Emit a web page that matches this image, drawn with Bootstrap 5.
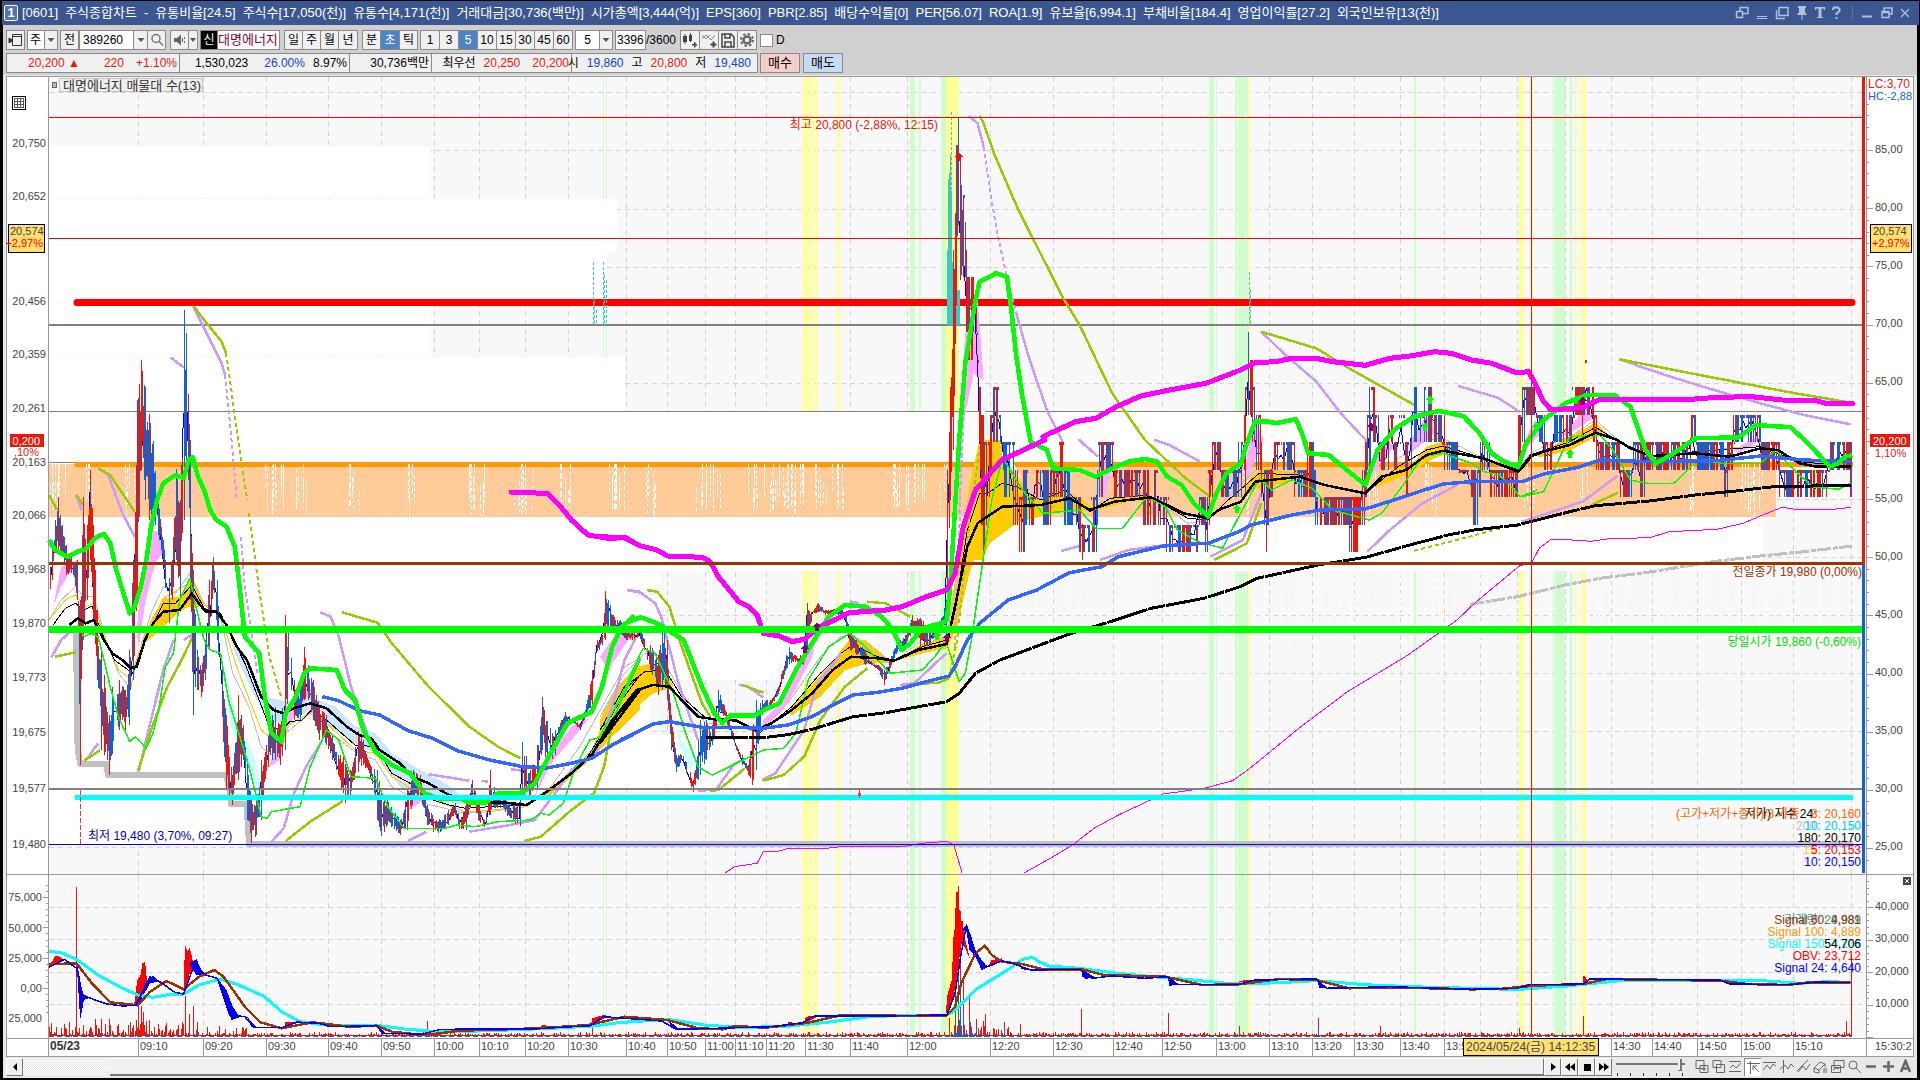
<!DOCTYPE html>
<html lang="ko">
<head>
<meta charset="utf-8">
<meta name="viewport" content="width=device-width, initial-scale=1">
<title>[0601] 주식종합차트</title>
<link href="https://cdn.jsdelivr.net/npm/bootstrap@5.3.0/dist/css/bootstrap.min.css" rel="stylesheet">
<style>
:root{--ui:"Liberation Sans","Noto Sans CJK KR",sans-serif}
body{background:#000;font-family:var(--ui);font-size:12px;line-height:16px;color:#000}
.titlebar{background:#3a5792;color:#fff;height:24px;margin:1px 1px 0 2px;padding:0 6px 0 2px;white-space:nowrap;font-size:13px}
.titlebar .fields{gap:7px}
.winno{border:1px solid #fff;border-radius:2px;width:14px;height:16px;line-height:14px;text-align:center;background:#5673ad;font-weight:bold}
.titlebar button{background:none;border:0;padding:0;width:20px;height:20px;color:#b3c0dc;line-height:0}
.titlebar svg,.tool svg,.nav-ico svg{display:block;margin:auto}
.frame{background:#e8e8e8;margin:0 3px 4px;padding-bottom:2px}
.tools{background:#d0d0d0;padding:5px 3px 2px;white-space:nowrap}
.tool{background:#f0f0f0;border:1px solid #8a8a8a;height:20px;padding:0;color:#000;font-size:12px;line-height:18px;text-align:center;min-width:19px;border-radius:0}
.tool+.tool{margin-left:-1px}
.tool.on{background:#4d84c6;color:#fff}
.tool.lead-in,.fieldbox.lead-in{margin-left:2px}
.tool.apart{margin-left:4px}
.fieldbox{background:#fff;border:1px solid #8a8a8a;border-radius:0;height:20px;padding:0 3px;font-size:12px;line-height:18px;color:#000;appearance:none;min-width:0}
.quote{gap:0;margin-top:3px}
.cellbox{background:#f0f0f0;border:1px solid #8a8a8a;height:20px;line-height:18px;padding:0 2px;display:flex;justify-content:flex-end;gap:8px;margin-right:-1px}
.up{color:#e8190c}.down{color:#0f45c8}
.order{border:1px solid #8a8a8a;height:20px;width:40px;line-height:18px;padding:0;margin-left:3px;font-size:13px;color:#000}
.chartbox{padding:1px 3px 0}
.chartbox svg{display:block;width:100%;height:auto}
.chartbox text{font-family:var(--ui);font-size:12px;dominant-baseline:central}
.chartbox text.axis{font-size:11px}
.footbar{height:19px;padding:0 3px}
.nav-ico{background:#f0f0f0;border:1px solid #777;border-top-color:#fff;border-left-color:#fff;width:17px;height:18px;padding:0;color:#000}
.mini{background:none;border:0;width:17px;height:18px;padding:0;color:#666}
.mini.on{background:#fff;border-left:1px solid #888;border-top:1px solid #888}
.track{width:87px;height:18px;background:repeating-conic-gradient(#e6e6e6 0 25%,#fff 0 50%) 0 0/2px 2px}
.thumb{height:18px;background:#f0f0f0;border-top:1px solid #fff;border-bottom:2px solid #777;border-right:1px solid #777}
.zoomslide{appearance:none;width:69px;height:18px;margin:0 8px 0 4px;background:linear-gradient(#777,#777) 0 5px/100% 2px no-repeat,repeating-linear-gradient(90deg,#333 0 1px,transparent 1px 13px) 1px 15px/100% 3px no-repeat}
.zoomslide::-webkit-slider-thumb{appearance:none;width:4px;height:12px;margin-top:-4px;background:#f0f0f0;border-right:2px solid #777;border-bottom:1px solid #777}
</style>
<script src="https://cdn.jsdelivr.net/npm/bootstrap@5.3.0/dist/js/bootstrap.bundle.min.js"></script>
</head>
<body>
<header class="titlebar d-flex align-items-center">
  <span class="winno me-1">1</span>
  <div class="fields d-flex flex-grow-1">
    <span>[0601]</span><span>주식종합차트</span><span>-</span><span>유통비율[24.5]</span><span>주식수[17,050(천)]</span><span>유통수[4,171(천)]</span><span>거래대금[30,736(백만)]</span><span>시가총액[3,444(억)]</span><span>EPS[360]</span><span>PBR[2.85]</span><span>배당수익률[0]</span><span>PER[56.07]</span><span>ROA[1.9]</span><span>유보율[6,994.1]</span><span>부채비율[184.4]</span><span>영업이익률[27.2]</span><span>외국인보유[13(천)]</span>
  </div>
  <button aria-label="창 분리"><svg width="14" height="14" fill="none" stroke="currentColor" stroke-width="1.5"><path d="M5 5V1.500h8v6H8M1.500 5.500h6v6h-6z"/></svg></button>
  <button aria-label="내리기"><svg width="14" height="14" fill="none" stroke="currentColor"><path d="M2 10.500h10M1.500 12.500h11"/></svg></button>
  <button aria-label="복사"><svg width="14" height="14" fill="none" stroke="currentColor" stroke-width="1.500"><path d="M4 1.500h9v8H4zM1.500 4v8.500H10"/></svg></button>
  <button aria-label="고정"><svg width="12" height="14" fill="currentColor"><path d="M2 0h8v2H9v4l2 3H1l2-3V2H2zM5.500 9h1v5h-1z"/></svg></button>
  <button aria-label="글꼴" style="width:16px"><svg width="12" height="14" fill="currentColor"><path d="M1 1h10v3h-1L9.500 2.500h-2V11h1.500v1H3v-1h1.500V2.500h-2L2 4H1z"/></svg></button>
  <button aria-label="도움말" style="width:16px"><svg width="9" height="14" fill="none" stroke="currentColor" stroke-width="2"><path d="M1 4V3l1-1.500h4L7.500 3v2L4.500 7.500V9M4.500 11v2"/></svg></button>
  <span class="ms-2 me-1 border-start border-secondary" style="height:14px"></span>
  <button aria-label="최소화"><svg width="12" height="14" fill="currentColor"><path d="M1 9.500h10v2H1z"/></svg></button>
  <button aria-label="이전 크기"><svg width="12" height="14" fill="none" stroke="currentColor" stroke-width="1.500"><path d="M3 5V2h8v6H8M1 5.500h7v6H1zM1 6.500h7"/></svg></button>
  <button aria-label="닫기" style="width:16px"><svg width="12" height="14" fill="none" stroke="currentColor" stroke-width="1.200"><path d="M2 3l8 8M10 3l-8 8"/></svg></button>
</header>
<main class="frame">
  <div class="tools">
    <div class="d-flex align-items-center">
      <button class="tool" aria-label="패널"><svg width="15" height="14" fill="none" stroke="#333"><path d="M4.500 1.500h9v11h-9zM4 3.500h10"/><path d="M1 5v5l4-2.500z" fill="#333"/></svg></button>
      <select class="fieldbox lead-in" style="width:18px;padding:0 2px" aria-label="시장"><option>주</option></select><span class="tool" style="min-width:14px;width:14px;margin-left:-1px"><svg width="12" height="17" fill="#555"><path d="M2.500 7h7L6 11z"/></svg></span>
      <button class="tool lead-in">전</button>
      <input class="fieldbox" style="width:55px" value="389260" aria-label="종목코드"><span class="tool" style="min-width:15px;margin-left:-1px"><svg width="12" height="17" fill="#555"><path d="M2.500 7h7L6 11z"/></svg></span>
      <button class="tool" aria-label="검색"><svg width="14" height="14" fill="none" stroke="#777" stroke-width="1.500"><circle cx="6" cy="5.500" r="4"/><path d="M9 8.500l4 4"/></svg></button>
      <button class="tool apart" style="width:18px" aria-label="소리"><svg width="14" height="14" fill="#666"><path d="M1 5h3l4-3.500v11L4 9H1zM9 5h1v4H9zM11 4h1v2h-1zM11 8h1v2h-1z"/></svg></button><button class="tool" style="min-width:10px;width:10px" aria-label="소리 메뉴"><svg width="8" height="8" fill="#555"><path d="M1 2h6L4 6z"/></svg></button>
      <span class="tool lead-in" style="background:#000;color:#fff;min-width:18px">신</span><span class="fieldbox overflow-hidden" style="width:62px;padding:0;border-left:0;color:#800040;font-size:13px">대명에너지</span>
      <button class="tool apart">일</button><button class="tool">주</button><button class="tool">월</button><button class="tool" style="width:20px">년</button>
      <button class="tool apart">분</button><button class="tool on" style="width:20px">초</button><button class="tool">틱</button>
      <button class="tool lead-in" style="width:20px">1</button><button class="tool" style="width:20px">3</button><button class="tool on" style="width:20px">5</button><button class="tool" style="width:20px">10</button><button class="tool" style="width:20px">15</button><button class="tool" style="width:20px">30</button><button class="tool" style="width:20px">45</button><button class="tool" style="width:20px">60</button>
      <input class="fieldbox lead-in text-center" style="width:25px" value="5" aria-label="주기"><span class="tool" style="min-width:14px;margin-left:-1px"><svg width="12" height="17" fill="#555"><path d="M2.500 7h7L6 11z"/></svg></span>
      <input class="fieldbox lead-in" style="width:31px;padding:0 1px" value="3396" aria-label="봉 개수"><span style="width:34px">/3600</span>
      <button class="tool" style="width:20px" aria-label="봉 추가"><svg width="16" height="16" fill="#444"><path d="M1 4h4v6H1zM2.500 2h1v10h-1zM7 3h3v6H7zM8 1h1v9H8zM10 12h5v1.500h-5zM12 10h1.500v5.500H12z"/></svg></button><button class="tool" style="width:20px" aria-label="지표 추가"><svg width="16" height="16" fill="none" stroke="#444"><path d="M1 7l4-4 5 5 4-5M1 3l4 4 4-4" stroke="#888"/><path d="M9.500 12.500h6M12.500 9.500v6" stroke-width="2"/></svg></button><button class="tool" style="width:20px" aria-label="저장"><svg width="14" height="15" fill="none" stroke="#444" stroke-width="1.500"><path d="M1 1h9l3 3v10H1zM4 1v4h5V1M4 14V9h6v5"/></svg></button><button class="tool" style="width:20px" aria-label="설정"><svg width="14" height="14" fill="none" stroke="#666"><circle cx="7" cy="7" r="3.500" stroke-width="2.500"/><circle cx="7" cy="7" r="6" stroke-width="2" stroke-dasharray="2.400 2.310"/></svg></button>
      <label class="d-flex align-items-center" style="margin-left:3px"><input type="checkbox" class="fieldbox p-0" style="width:13px;height:13px;margin-right:3px">D</label>
    </div>
    <div class="quote d-flex">
      <div class="cellbox" style="width:174px"><span class="up">20,200 ▲</span><span class="up ms-3">220</span><span class="up ms-1">+1.10%</span></div>
      <div class="cellbox" style="width:171px"><span>1,530,023</span><span class="down ms-2">26.00%</span><span>8.97%</span></div>
      <div class="cellbox" style="width:83px"><span>30,736백만</span></div>
      <div class="cellbox" style="width:141px"><span>최우선</span><span class="up">20,250</span><span class="up ms-1">20,200</span></div>
      <div class="cellbox" style="width:187px"><span>시</span><span class="down">19,860</span><span>고</span><span class="up">20,800</span><span>저</span><span class="down me-1">19,480</span></div>
      <button class="order" style="background:#f6cfca">매수</button><button class="order" style="background:#c6dcf4">매도</button>
    </div>
  </div>
  <div class="chartbox"><svg id="chart" viewBox="6 76 1908 981" role="img" aria-label="대명에너지 초봉 차트"></svg></div>
  <div class="footbar d-flex align-items-center">
    <button class="nav-ico" aria-label="왼쪽"><svg width="8" height="10"><path d="M6 1v8L2 5z"/></svg></button>
    <div class="track"></div><div class="thumb flex-grow-1"></div>
    <button class="nav-ico" aria-label="재생"><svg width="10" height="10"><path d="M3 1v8l5-4z"/></svg></button><button class="nav-ico" aria-label="뒤로"><svg width="12" height="10"><path d="M6 1v8L1 5zM11 1v8L6 5z"/></svg></button><button class="nav-ico" aria-label="정지"><svg width="10" height="10"><path d="M2 2h7v7H2z"/></svg></button><button class="nav-ico" aria-label="앞으로"><svg width="12" height="10"><path d="M1 1v8l5-4zM6 1v8l5-4z"/></svg></button>
    <input type="range" class="zoomslide" value="96" aria-label="확대 비율">
    <div class="d-flex" id="icons"></div>
  </div>
</main>
<script>
// Each stretch of a series is stored in its own local units: origin x, y and units per pixel.
const TILE={A:[0,80,3,3],B:[0,440,2.45,3],C:[600,440,2.45,3],D:[900,80,2.45,3],E:[1240,320,2.306,3],F:[1500,780,3,3],G:[0,860,1.633,3],H:[900,860,2.45,3],P:[0,0,1,1]};
let out='';
const rect=(x,y,w,h,f)=>out+=`<rect x="${x}" y="${y}" width="${w}" height="${h}" fill="${f}"/>`;
const hline=(x1,x2,y,c,w=1,e='')=>out+=`<path d="M${x1} ${y}H${x2}" stroke="${c}" stroke-width="${w}" ${e}/>`;
const vline=(x,y1,y2,c,w=1,e='')=>out+=`<path d="M${x} ${y1}V${y2}" stroke="${c}" stroke-width="${w}" ${e}/>`;
const label=(x,y,s,c='#444',a='start',e='')=>out+=`<text x="${x}" y="${y}" fill="${c}" text-anchor="${a}" ${e}>${s}</text>`;
const AX='class="axis"';
// "|" starts a new stroke; with split on, so does every change of tile
function trace(s,split){let t=TILE.P,d='',m='M';for(const k of s.trim().split(/\s+/)){if(k==='|'){m='M';continue}if(TILE[k]){t=TILE[k];if(split)m='M';continue}const[x,y]=k.split(',').map(Number);d+=m+(t[0]+x/t[2]).toFixed(1)+' '+(t[1]+y/t[3]).toFixed(1);m='L'}return d}
const line=(s,c,w=1,e='',split=false)=>out+=`<path d="${trace(s,split)}" fill="none" stroke="${c}" stroke-width="${w}" stroke-linejoin="round" ${e}/>`;
const area=(s,c)=>out+=`<path d="${trace(s,true)}" fill="${c}"/>`;
let seed=7;const rnd=()=>(seed=(seed*16807)%2147483647)/2147483647;

rect(6,76,1908,981,'#fff');rect(49,77,1814,797,'#f8f8f8');rect(49,875,1817,162,'#f8f8f8');
const times=[[138,'09:10'],[203,'09:20'],[266,'09:30'],[328,'09:40'],[381,'09:50'],[434,'10:00'],[479,'10:10'],[525,'10:20'],[568,'10:30'],[626,'10:40'],[667,'10:50'],[705,'11:00'],[735,'11:10'],[766,'11:20'],[805,'11:30'],[850,'11:40'],[907,'12:00'],[990,'12:20'],[1053,'12:30'],[1113,'12:40'],[1162,'12:50'],[1216,'13:00'],[1269,'13:10'],[1312,'13:20'],[1354,'13:30'],[1400,'13:40'],[1444,'13:50'],[1480,''],[1517,''],[1565,''],[1611,'14:30'],[1652,'14:40'],[1697,'14:50'],[1741,'15:00'],[1793,'15:10'],[1851,'']];
const dash='stroke-dasharray="5 4"';
for(const[x]of times){vline(x+.5,77,874,'#d4d4d4',1,dash);vline(x+.5,876,1037,'#d4d4d4',1,dash)}
for(const y of[92,150,209,267,325,383,442,499,557,615,673,731,789,847,907,939,972,1004])hline(49,1862,y+.5,'#d4d4d4',1,dash);
const Y='#ffff99',N='#ccffcc';
for(const[x,w,c]of[[603,1,N],[606,1,N],[803,5,Y],[809,3,Y],[813,2,Y],[816,2,Y],[837,3,Y],[910,5,N],[919,2,N],[941,5,N],[946,13,Y],[1209,5,N],[1216,1,N],[1235,2,N],[1238,7,N],[1246,2,N],[1248,2,Y],[1414,2,N],[1519,5,Y],[1532,1,Y],[1553,1,N],[1555,10,N],[1570,2,N],[1575,1,Y],[1579,1,Y],[1582,4,Y]]){rect(x,77,w,797,c);rect(x,875,w,162,c)}
// volume profile
for(const[y,h,x]of[[147,51,431],[199,52,617],[251,52,607],[304,52,431],[357,54,625],[411,53,1862],[517,54,1763],[571,54,661],[626,54,877],[680,55,649],[735,54,788],[790,55,569]])rect(49,y,x-49,h,'#fff');
rect(49,464,1727,53,'#ffcc99');
hline(77,1852,302.5,'#f00',7,'stroke-linecap="round" shape-rendering="auto"');
hline(49,1862,325,'#808080',2);hline(49,1862,411.5,'#808080');hline(49,77,462.5,'#808080');
hline(77,1851,464.5,'#ff9900',5,'stroke-linecap="round"');
const clusters=[52,60,88,130,270,278,300,355,412,470,478,520,528,565,612,620,650,702,715,752,770,780,790,800,820,838,893,903,920,945,1245,1375,1430,1530,1585,1695,1745,1757];
for(const c of clusters)for(let k=0;k<6;k++){const x=Math.round(c-6+rnd()*12),a=464+(rnd()<.5?0:rnd()*30);vline(x+.5,a,a+(517-a)*(.5+rnd()*.5),'#fff',1,`stroke-dasharray="${3+Math.floor(rnd()*4)} 3"`)}
for(let k=0;k<170;k++){const x=Math.round(950+rnd()*900);vline(x+.5,572,590+rnd()*60,'#fff',1,'stroke-dasharray="3 4"')}
// shaded ribbons
const gold='#ffcc00';
area('B 560,590 600,640 650,770 700,785 760,770 820,800 870,860 920,880 960,940 1030,990 1090,1030 1140,1075 1200,1085 1250,1075 1240,1095 1100,1090 1030,1070 980,1040 920,940 860,905 800,850 760,810 700,850 660,850 620,760 580,650','#cce5ff');
area('B 245,640 280,830 300,850 270,860 | 540,640 570,790 590,860 620,940 650,1080 640,1110 600,960 565,860 | 940,1060 1000,1150 960,1130 C 175,800 200,900 230,950 225,990 195,920 D 190,880 210,1000 230,1080 200,1050 | 240,1070 270,1130 300,1200 260,1150','#ccffff');
area('B 130,500 150,380 190,360 150,440 | 335,580 345,420 375,270 395,280 405,330 380,370 355,490 340,620 | 660,980 690,840 740,740 770,750 740,790 710,850 685,960 | 1000,1110 1020,1060 1040,1080 | 1310,1070 1340,960 1400,860 1450,830 1480,700 1520,580 1545,590 1500,670 1460,810 1400,900 1350,970 C 0,650 40,580 100,590 60,605 20,690 | 400,840 440,790 500,640 540,550 520,650 460,790 400,870 D 145,1000 160,760 190,660 205,900 180,880 160,1000 150,1100 | 488,1220 510,1100 520,1150 500,1260 | 845,1160 870,1010 890,1080 850,1200 | 1150,1160 1190,1070 1210,1100 1160,1180 | 1250,1080 1300,990 1310,1060 1250,1120 E 650,380 680,300 700,330 660,390 | 740,350 800,260 820,290 760,340 | 1140,390 1190,350 1200,360 1150,400','#ffaaff');
area('B 345,610 370,540 400,475 440,470 470,415 500,490 480,505 460,500 430,525 400,560 360,605 | 1330,1070 1450,930 1500,780 1568,680 1568,810 1500,890 1440,965 1340,1075 C 0,840 40,740 90,680 130,670 160,685 180,740 130,760 80,810 0,925 | 460,815 560,680 610,600 650,600 700,650 720,668 650,672 600,690 540,770 470,825 | 720,665 790,610 850,590 860,500 885,300 905,140 930,0 985,0 985,260 930,310 905,400 875,560 850,625 790,640 D 170,1440 185,1200 220,1160 240,1150 260,1140 290,1200 330,1260 400,1225 440,1255 480,1290 380,1300 290,1325 220,1390 200,1440 | 480,1295 520,1255 590,1245 640,1255 560,1265 500,1285 | 830,1270 860,1190 890,1165 1020,1185 960,1205 870,1225 | 1160,1215 1220,1160 1250,1160 1290,1100 1330,1085 1360,1110 1300,1140 1240,1185 1160,1225 E 680,405 760,350 820,308 850,345 820,350 760,392 690,412',gold);
// grey floor line
line('B 186,560 190,930 197,973 262,973 264,1006 555,1006 562,1050 566,1093 604,1093 610,1213 P 1853,844','#c0c0c0',6);
// teal spikes
for(const[x,a,b]of[[593,262,325],[594,300,325],[596,310,325],[603,262,325],[604,275,325],[606,280,325],[951,112,200],[955,240,325],[1249,272,325],[1250,290,325]])vline(x+.5,a,b,'#33cccc',1,'stroke-dasharray="3 2"');
area('P 947,325 948,182 950,170 951,140 952,240 954,325 | 956,325 957,290 960,290 960,325','#33cccc');
// price bars: x, high, low
const env=`49,560,600 52,545,580 55,520,553 58,497,553 62,525,555 66,545,575 72,556,575 77,560,600 80,600,765 83,497,640 87,525,600 90,470,560 93,525,620 97,610,680 101,650,750 104,675,755 109,715,775 114,665,750 119,680,730 125,690,730 129,650,725 133,560,680 137,400,600 141,360,470 145,387,500 149,414,520 153,441,525 158,490,535 163,540,560 168,560,640 172,560,600 176,469,560 180,500,600 184,310,520 186,333,470 188,394,480 190,440,600 193,570,715 197,650,690 201,670,697 205,640,680 209,580,650 213,557,590 217,580,640 221,650,720 226,715,790 232,775,805 238,695,780 243,725,760 247,760,820 251,800,843 256,800,835 261,760,820 267,730,770 272,715,760 275,707,760 280,725,765 285,615,750 289,620,680 294,680,720 300,690,720 304,647,700 308,665,700 313,680,720 319,705,740 326,715,745 332,735,760 338,755,775 344,745,805 350,770,795 357,728,775 363,740,765 370,765,775 377,770,820 382,795,843 387,800,825 393,810,830 400,820,835 407,790,830 413,770,800 420,775,800 427,805,825 434,815,835 440,820,832 448,810,825 455,803,815 460,820,833 466,800,830 472,780,800 478,800,820 485,822,832 490,770,815 497,795,808 505,798,812 512,805,825 520,800,826 522,742,800 530,770,800 537,745,790 542,697,750 548,725,765 555,730,755 565,712,725 573,718,722 580,725,730 587,700,715 592,670,708 596,640,655 602,635,645 605,591,640 609,597,630 613,615,630 620,620,635 626,632,640 632,630,640 639,625,640 645,640,655 650,645,670 658,655,695 662,627,690 667,640,700 671,715,750 676,755,772 682,753,760 688,765,780 693,780,792 698,740,780 700,720,775 706,720,760 712,725,745 718,690,720 724,705,715 730,720,735 736,745,750 742,755,765 748,765,775 752,730,785 756,700,770 762,700,715 768,700,710 775,695,700 780,678,690 788,645,665 795,655,662 803,655,665 807,603,650 812,610,615 818,603,612 825,610,615 832,608,615 840,607,615 845,612,620 850,628,650 856,640,655 865,650,665 870,660,665 878,665,670 884,670,685 889,660,672 897,640,652 905,635,650 912,615,630 920,618,650 930,628,645 938,625,635 944,608,625 946,600,640 947,470,600 950,387,500 953,250,450 956,145,300 958,118,225 960,160,280 964,198,280 967,265,333 970,279,387 973,279,333 976,306,333 979,387,441 981,414,524 985,441,552 989,441,497 993,387,441 996,387,441 1000,414,441 1004,441,497 1010,441,497 1016,469,524 1021,497,552 1026,469,524 1033,497,524 1036,469,497 1043,469,524 1050,469,524 1056,469,497 1061,441,497 1066,469,524 1071,497,524 1077,497,524 1082,524,560 1090,524,552 1096,497,552 1099,441,497 1105,441,469 1111,441,469 1115,469,497 1138,469,497 1144,469,524 1150,497,524 1155,469,524 1160,497,524 1167,497,552 1172,524,552 1180,524,557 1188,524,552 1195,524,540 1200,497,524 1207,497,552 1211,460,500 1214,441,469 1219,441,469 1223,469,497 1237,469,497 1242,441,497 1246,387,469 1248,332,414 1250,360,414 1253,387,441 1257,414,469 1262,441,497 1265,469,552 1270,469,497 1275,441,469 1290,441,469 1297,469,497 1303,469,497 1310,441,497 1314,469,497 1318,496,552 1325,497,524 1345,497,524 1354,497,552 1360,497,524 1364,469,524 1368,414,469 1372,387,441 1376,414,441 1380,441,469 1386,441,469 1390,414,441 1396,441,469 1402,414,441 1406,441,497 1410,441,469 1414,387,441 1420,414,441 1430,387,441 1434,414,441 1440,414,441 1445,441,469 1452,441,469 1460,469,475 1468,469,475 1475,469,524 1482,441,469 1487,441,469 1493,469,497 1516,469,497 1519,414,469 1522,387,441 1527,387,414 1534,387,414 1540,414,441 1546,441,469 1550,441,469 1556,414,441 1570,414,441 1576,387,414 1582,387,430 1585,359,400 1590,387,414 1594,414,441 1600,441,469 1618,441,469 1622,469,497 1628,469,497 1635,441,469 1641,441,497 1650,441,469 1690,441,469 1692,414,441 1696,441,469 1722,441,469 1726,469,497 1730,441,469 1736,414,441 1757,414,441 1762,441,469 1778,441,469 1782,469,497 1825,469,497 1832,441,469 1849,441,469 1851,441,497`.split(' ').map(s=>s.split(',').map(Number));
const RED='#e8190c',BLUE='#1560d0';
function drawBars(){let i=0,mid='',col=RED,reds='',blues='';
 for(let x=49;x<=1851;x++){while(i<env.length-2&&env[i+1][0]<=x)i++;
  const a=env[i],b=env[i+1],f=Math.min(1,(x-a[0])/(b[0]-a[0]));let h=a[1]+(b[1]-a[1])*f,l=a[2]+(b[2]-a[2])*f,s=l-h;
  let t=h+s*.35*rnd(),u=l-s*.35*rnd();
  if(x===a[0]){t=h;u=l}
  if(x>962&&u<560){t=414.500+Math.round((h-414.500+(rnd()-.5)*18)/27.500)*27.500;u=414.500+Math.round((l-414.500+(rnd()-.5)*18)/27.500)*27.500;if(rnd()<.25)u=t+3}
  if(rnd()<.38)col=col===RED?BLUE:RED;
  if(rnd()<.85){const p=`M${x+.5} ${t.toFixed(1)}V${Math.max(u,t+2).toFixed(1)}`;col===RED?reds+=p:blues+=p}
  if(x%3===0)mid+=(mid?'L':'M')+x+' '+((h+l)/2+(rnd()-.5)*s*.5).toFixed(1)}
 out+=`<path d="${mid}" fill="none" stroke="#0000e0"/><path d="${blues}" stroke="${BLUE}"/><path d="${reds}" stroke="${RED}"/>`}
// thin averages
line('B 120,540 150,480 185,440 205,470 230,470 260,600 290,700 320,745 340,640 370,520 400,440 430,460 465,400 500,490 540,530 570,700 610,800 640,920 665,945 700,880 760,820 800,870 870,935 920,960 960,1040 1040,1090 1140,1120 1200,1115 1290,1100 1350,1040 1420,920 1480,790 1530,680 1568,655 C 0,830 60,700 110,640 150,650 200,760 260,850 340,860 390,880 460,790 540,650 590,590 620,585 680,640 720,665 790,600 850,590 875,400 900,200 930,70 960,20 985,60 1020,120 1080,175 1140,145 1200,215 1250,165 1340,160 1440,250 1490,240 1530,180 D 880,1160 960,1180 1040,1215 1140,1245 1190,1160 1290,1080 1330,1075 1430,1135 1515,1165 E 670,400 700,380 760,350 820,300 880,370 950,410 1050,395 1200,375 1290,420 1400,440','#c0c0c0',1);
line('B 120,540 160,480 185,465 210,500 230,490 250,570 290,690 320,715 345,620 400,475 470,425 500,495 540,525 580,680 640,870 670,900 700,860 765,815 800,850 870,930 920,940 960,1010 1040,1070 1140,1115 1200,1110 1290,1100','#ffcc00',1);
line('B 130,555 160,505 185,490 205,510 225,498 250,580 280,660 325,700 360,590 400,490 430,490 470,435 500,505 540,520 600,670 660,860 690,870 710,845 740,840 765,808 800,840 870,915 920,920 960,1000 1020,1040 1060,1080 1100,1095 1140,1105 1200,1100 1290,1095 1360,1040 1430,970 1480,870 1530,750 1568,705 C 0,870 60,740 110,695 160,690 200,770 260,835 340,845 390,880 470,800 540,700 590,640 620,615 680,650 720,660 790,620 850,600 880,430 900,270 930,160 950,160 985,130 1020,140 1080,180 1140,150 1200,215 1250,175 1340,165 1440,235 1490,240 1530,190 D 880,1180 980,1185 1040,1215 1140,1240 1220,1160 1290,1110 1330,1098 1430,1135 1515,1170 E 670,405 760,365 820,322 880,370 950,408 1050,395 1200,380 1290,425 1400,438','#000',1);
const P='#cc99ff',O='#99cc00',dd='stroke-dasharray="4 3"';
line('A 580,680 610,740 640,800 665,850 675,885 | 513,833 552,863 B 126,652 150,600 180,565 | 186,165 200,210 | 240,85 265,105 300,220 330,290 | 210,962 240,910 | 340,995 360,890 400,690 425,600 | 450,600 475,580 | 785,517 810,530 830,590 860,740 900,880 | 665,1205 695,1165 720,1060 750,980 790,900 | 1000,1203 1045,1175 | 1050,1003 1150,1022 | 1180,1022 1195,1025 | 1253,988 1280,992 | 1150,1175 1250,1155 1310,1140 1360,1060 1400,990 1460,940 1500,800 1530,660 1568,570 | 1537,450 1568,455 C 66,450 100,458 135,490 150,530 165,600 190,720 220,830 240,900 | 240,1053 285,1048 330,970 350,960 | 340,735 360,738 400,772 | 397,1020 430,1000 500,870 530,740 590,640 | 612,484 635,490 | 735,735 770,730 830,660 850,640 D 168,108 190,130 205,200 | 285,700 315,830 360,990 400,1090 | 437,1078 485,1130 | 623,1080 660,1095 735,1145 | 395,1413 440,1398 | 885,755 940,820 1020,905 1080,1000 1145,1085 | 1367,918 1465,953 1517,995 | 1145,1415 1200,1350 1280,1270 1365,1215 | 490,1440 560,1410 650,1395 | 760,1430 840,1380 885,1240 E 650,605 790,545 870,468 | 875,118 980,165 1080,205 1200,250 1300,285 1408,313',P,2.5,'',true);
line('A 675,885 690,1030 700,1140 710,1260 B 590,290 600,440 630,700 C 870,620 880,300 885,0 D 145,1300 160,900 | 205,200 220,330 240,470 260,580 285,700',P,2,dd,true);
line('A 580,678 620,730 665,785 678,820 B 120,165 140,210 | 188,165 203,195 | 240,85 270,105 330,215 | 135,650 185,637 | 207,962 245,930 | 338,993 370,870 410,740 445,660 472,590 | 838,517 925,548 960,610 1050,740 1150,860 1220,920 1275,955 | 700,1203 760,1145 840,1083 | 1285,1203 1325,1190 1400,1110 1455,1060 1480,980 1500,850 1540,780 C 115,450 140,455 170,500 200,620 250,790 270,830 | 270,1053 290,1050 355,985 | 350,735 400,758 | 400,1022 450,1005 500,950 540,840 600,740 655,685 | 655,485 700,490 760,530 | 760,733 830,728 855,715 D 195,108 205,130 230,220 290,390 400,655 440,735 520,940 600,1080 700,1195 760,1250 | 885,755 1020,805 1100,865 1260,975 | 770,1440 850,1390 885,1270 E 810,555 872,518 | 875,118 1060,165 1260,215 1408,248',O,2.5,'',true);
line('A 678,820 690,900 720,1120 742,1260 B 610,220 635,450 660,650 690,775 C 855,715 875,600 900,300 930,20 E 402,692 500,660 600,625',O,2,dd,true);
drawBars();
line('B 195,560 205,590 225,580 240,590 255,660 270,740 290,830 318,905 332,890 358,925 375,880 390,800 405,680 425,640 440,480 465,415 480,500 500,600 515,630 540,640 560,780 590,900 610,980 640,1130 655,1135 665,1115 735,1100 760,980 800,870 830,900 860,1010 920,1015 950,1100 990,1165 1090,1165 1120,1155 1165,1160 1220,1145 1300,1140 1325,1120 1345,1125 1380,1090 1410,980 1445,900 1480,890 1520,790 1568,660 C 0,890 40,820 70,720 105,625 135,640 180,760 210,880 240,980 275,1005 310,985 400,930 450,925 480,880 510,720 560,620 580,605 612,580 650,620 680,660 710,700 790,690 820,650 848,605 880,725 895,700 910,600 930,430 960,180 985,60 D 250,1130 300,1230 350,1300 440,1290 480,1345 545,1345 580,1290 605,1250 650,1280 680,1350 730,1385 790,1405 830,1310 880,1195 910,1230 960,1200 1010,1225 1060,1290 1150,1320 1180,1300 1230,1220 1280,1130 1330,1120 1400,1150 1430,1175 1470,1185 1520,1250 1560,1230 E 650,530 700,515 760,350 830,345 860,390 900,480 940,490 1000,490 1040,440 1060,420 1110,430 1200,430 1235,390 1270,440 1320,500 1380,508 1408,490','#00ff00',1.5);
line('B 170,555 190,535 210,550 230,540 250,590 275,640 300,660 320,685 335,680 355,600 375,550 400,515 440,510 470,460 490,495 505,515 530,515 555,555 580,620 605,660 640,770 670,810 695,820 720,805 760,790 800,805 850,860 880,885 910,895 930,930 980,970 1010,1010 1050,1030 1100,1065 1160,1085 1240,1088 1290,1095 1340,1055 1400,1000 1450,945 1500,840 1568,750 C 0,910 50,810 90,750 130,735 170,740 200,780 240,830 280,838 330,840 380,870 420,850 470,810 520,760 570,690 615,650 680,655 720,662 780,630 850,612 870,500 900,320 925,250 985,200 1080,195 1150,175 1200,210 1260,185 1350,172 1430,220 1490,235 D 780,1290 835,1265 870,1205 980,1190 1040,1215 1140,1240 1180,1190 1240,1170 1290,1125 1330,1112 1430,1135 1515,1175 1540,1140 E 670,410 700,395 760,375 820,338 870,360 900,385 950,408 1050,400 1130,410 1200,385 1240,390 1290,430 1330,440 1410,440','#000',2.500);
line('B 790,770 830,782 880,812 930,825 1000,872 1060,895 1120,932 1200,960 1280,980 1340,984 1400,970 1450,955 1500,915 1568,872 C 50,900 130,852 170,845 250,862 330,862 400,865 460,855 520,830 570,795 620,765 680,757 740,745 800,725 855,708 870,680 900,600 930,550 1000,480 1070,450 1150,398 1230,380 1270,350 1380,318 1480,310 D 755,1390 830,1355 860,1335 960,1305 1030,1290 1140,1287 1210,1260 1260,1240 1330,1212 1400,1205 1510,1205 E 650,485 700,462 780,442 830,420 940,425 1100,422 1200,408 1300,420 1408,425','#3366ff',3.500);
line('C 260,893 400,893 460,884 520,868 620,830 700,818 780,800 850,785 880,760 920,700 980,660 1050,628 1150,582 1250,545 1350,505 1480,475 E 0,800 40,775 180,735 290,712 400,672 480,645 540,630 640,615 700,595 760,575 820,557 950,542 1050,525 1150,512 1230,500 1408,496','#000',3,'stroke-dasharray="42 1 17 1"');
line('E 530,853 640,830 750,795 830,775 950,755 1090,725 1200,708 1300,695 1412,678','#c0c0c0',3,'stroke-dasharray="14 2 5 1"');
line('B 120,300 135,330 165,350 190,335 210,328 235,292 255,282 270,310 285,390 300,450 318,520 330,500 345,440 360,350 370,260 385,180 400,130 430,105 450,115 462,60 472,52 485,110 500,150 515,210 530,240 555,260 575,320 585,420 600,590 635,640 650,780 665,880 690,905 700,820 725,770 745,700 760,685 825,690 845,750 870,780 890,870 920,935 960,975 1005,1000 1040,1060 1080,1078 1130,1075 1150,1088 1190,1088 1220,1060 1280,1058 1310,1030 1340,960 1390,850 1450,815 1475,740 1500,620 1525,560 1550,530 C 70,545 100,532 140,550 165,570 205,600 250,740 280,820 300,850 320,826 380,826 410,805 440,790 480,690 520,610 560,530 600,495 650,500 690,530 715,565 740,630 760,610 790,565 840,548 850,540 858,440 870,200 880,0 D 160,850 185,660 195,605 235,580 262,590 272,680 285,830 300,950 320,1085 360,1110 375,1165 440,1170 480,1190 520,1165 560,1145 600,1137 630,1145 655,1190 690,1215 720,1270 755,1310 775,1240 800,1180 835,1150 850,1090 870,1025 900,1024 920,1030 970,1018 985,1060 1000,1120 1050,1125 1090,1165 1140,1215 1170,1110 1215,1045 1260,1010 1320,993 1380,1008 1420,1060 1450,1120 1480,1145 1515,1160 E 660,370 700,300 750,250 800,225 865,226 900,260 935,390 960,430 1000,400 1050,355 1150,352 1190,315 1270,322 1310,370 1360,440 1380,430 1395,410 1412,406','#00ff00',4.500);
line('B 1253,157 1340,160 1370,195 1400,240 1440,285 1490,295 1535,293 C 0,290 60,293 100,318 140,330 165,348 250,352 270,365 290,410 340,485 365,500 385,525 400,580 440,588 470,605 500,598 540,560 610,518 700,510 740,500 800,470 850,450 870,400 890,260 920,150 985,60 1090,0 D 350,1070 430,1025 480,1015 530,980 590,948 660,930 750,910 830,872 870,848 920,845 960,835 1020,835 1060,845 1140,856 1200,835 1250,828 1310,815 1350,820 1400,840 1450,850 1510,878 1540,875 E 680,190 700,245 718,270 790,262 830,238 1040,238 1100,232 1180,230 1250,240 1330,242 1350,250 1412,250','#ff00ff',5,'stroke-linecap="round"');
line('C 307,1298 330,1280 385,1270 400,1235 440,1233 460,1225 540,1227 590,1220 750,1218 790,1210 850,1204 867,1215 887,1298 | 1040,1298 1110,1250 1160,1213 1210,1165 1270,1125 1380,1062 1480,1045 1550,1022 P 1249,769 1298,729 1347,692 1408,655 1457,620 E 545,845 645,737 672,730 690,685 715,660 740,658 810,664 850,656 945,653 990,635 1100,628 1160,610 1200,588 1250,562 1280,568 1370,568 1408,562','#ff00ff',1);
rect(49,117,1813,1,'#f00');rect(49,238,1813,1,'#f00');
hline(49,1862,563.5,'#993300',3);hline(49,1862,629.5,'#00ff00',7);hline(49,1862,789,'#808080',2);
hline(77,1851,797.5,'#00ffff',5,'stroke-linecap="round"');
vline(80.5,790,846,'#f33',1.5,'stroke-dasharray="5 2"');vline(859.5,790,798,'#f33');rect(858,793,3,3,'#f33');
for(const[x,y,c]of[[805,649,'#800080'],[817,627,'#800080'],[947,638,'#800080'],[1371,427,'#800080'],[1583,401,'#800080'],[1430,400,'#0f0'],[1425,427,'#0f0'],[1237,509,'#0f0'],[1576,400,'#0f0'],[1536,427,'#0f0'],[1570,454,'#0f0'],[937,636,'#0f0'],[959,157,'#e01020']])area(`P ${x},${y-5} ${x+4},${y} ${x+2},${y} ${x+2},${y+4} ${x-2},${y+4} ${x-2},${y} ${x-4},${y}`,c);

// volume and OBV pane
const tall={76:149,138:55,141:30,143:24,185:40,189:22,193:30,219:10,427:15,592:12,1081:27,1168:23,1239:10,1318:18,1380:10,1519:8,1583:20,1846:15,1851:82,955:110,958:150,960:125,963:58,969:40,985:22,1004:14,1020:12};
let vr='',vb='';for(let x=49;x<=1851;x++){let m=x<90?14:x<150?16:x<200?14:x<250?9:x>945&&x<990?22:x<1010&&x>945?8:3;let h=rnd()**3*m+1;if(x>136&&x<150)h+=rnd()*10;if(tall[x])h=tall[x];if(rnd()<.15||x>948&&x<975)vb+=`M${x+.5} 1037v-${(h*.4).toFixed(1)}`;vr+=`M${x+.5} 1036v-${h.toFixed(1)}`}
out+=`<path d="${vr}" stroke="${RED}"/><path d="${vb}" stroke="${BLUE}"/>`;hline(49,1852,1036.5,BLUE,1,'stroke-dasharray="5 3"');
area('G 80,320 90,288 98,290 105,300 95,310 | 219,436 224,360 230,345 232,310 237,305 241,380 228,430 | 300,400 302,252 306,275 310,262 318,330 310,340 | 465,503 466,487 490,486 | 883,507 885,495 905,500 | 965,498 967,475 985,465 995,468 975,485 | 1285,500 1287,486 1305,490 | 1313,490 1316,470 1340,466 H 113,465 115,410 127,360 131,230 135,200 137,92 140,100 143,85 146,155 148,190 153,180 160,240 172,300 158,260 150,250 145,300 130,420 | 215,320 225,300 250,295 250,303 | 830,374 832,362 860,360 | 1518,385 1521,374 1545,373 F 250,612 250,588 257,590 260,600 270,597','#f00');
area('G 125,300 135,400 145,415 137,420 131,480 | 225,436 237,370 250,345 258,365 245,370 | 310,310 321,297 332,345 320,345 | 355,355 370,390 380,440 392,472 378,480 370,430 | 403,470 420,503 410,500 | 617,498 632,522 622,520 | 1092,482 1110,508 1097,505 H 152,210 163,193 172,220 185,270 200,300 215,322 200,330 185,290 170,270 163,215 | 295,316 320,330 298,328 | 445,328 478,352 455,357 447,350 | 1022,358 1048,385 1027,385 | 656,350 682,375 660,377 F 672,602 690,612 675,610','#00f');
line('G 80,274 100,278 125,298 160,345 200,385 225,405 250,412 275,404 300,402 325,375 360,357 390,375 430,408 460,455 490,485 530,495 620,497 660,507 720,516 800,512 900,505 970,498 1010,488 1090,478 1150,495 1210,503 1290,498 1350,487 1420,470 1460,467 H 0,465 110,467 130,455 160,420 190,385 230,355 270,325 300,298 325,292 340,305 365,318 440,325 520,338 620,350 700,358 800,370 850,372 960,366 1020,362 1140,374 1250,380 1400,385 1470,387 F 0,630 60,628 200,618 300,608 350,603 600,600 800,603 900,610 980,605 1054,607','#00ffff',3);
line('G 80,313 125,310 150,370 180,427 225,436 245,395 272,363 300,388 325,350 350,330 365,350 400,440 425,487 460,505 510,487 570,500 615,497 640,515 680,523 710,522 750,512 880,505 960,495 1020,470 1090,480 1140,505 1180,508 1200,498 1250,503 1320,488 1370,467 1450,466 H 0,468 115,466 135,440 150,370 185,280 208,257 225,285 250,305 300,312 350,328 445,328 500,345 650,350 740,375 830,373 930,357 1020,360 1100,385 1200,382 1400,388 1470,387 F 0,627 100,617 250,612 320,597 660,602 740,612 860,615 930,607 1050,608','#993300',2.500);
line('G 80,322 105,298 125,325 135,405 155,420 175,432 200,438 222,436 245,350 265,370 285,397 300,402 318,310 335,345 355,355 375,465 400,470 415,503 460,503 485,486 520,490 540,500 615,497 625,520 690,522 720,508 870,507 965,497 985,470 1080,483 1105,508 1170,505 1260,500 1310,488 1330,468 1450,468 H 0,467 115,465 135,400 150,280 163,195 180,270 200,310 215,320 250,302 280,312 320,330 440,328 470,355 520,348 600,355 655,350 680,373 830,373 870,360 1020,357 1045,385 1200,380 1400,388 1470,386 F 0,625 50,625 90,614 250,612 270,597 660,600 690,612 870,614 950,606 1054,608','#0000ff',1.500);

// crosshair and price edge
vline(1531.5,77,1037,'#e8190c');rect(1862,77,3,487,'#e8190c');rect(1862,564,3,309,'#1560d0');
// frame lines and axes
const G='#999';vline(6.5,76,1057,G);vline(1913.5,76,1057,G);hline(6,1914,76.5,G);hline(6,1914,874.5,G);hline(6,1914,1038.5,G);hline(6,1914,1056.5,G);vline(48.5,77,1057,G);vline(1866.5,77,1057,G);
for(let k=0;k<67;k++){const y=92+k*11.630;if(y>98)hline(1867,k%5?1869:1873,Math.round(y)+.5,G)}
for(let k=0;k<25;k++)hline(1867,k%5===4?1873:1869,Math.round(881+k*6.500)+.5,G);
for(let k=0;k<22;k++)hline(k%5===2?43:46,48,Math.round(885+k*6.060)+.5,G);
[[143,'20,750'],[196,'20,652'],[301,'20,456'],[354,'20,359'],[408,'20,261'],[462,'20,163'],[515,'20,066'],[569,'19,968'],[623,'19,870'],[677,'19,773'],[732,'19,675'],[788,'19,577'],[844,'19,480']].forEach(([y,s])=>label(46,y,s,'#444','end',AX));
[[897,'75,000'],[928,'50,000'],[958,'25,000'],[988,'0,00'],[1018,'25,000']].forEach(([y,s])=>label(42,y,s,'#444','end',AX));
[85,80,75,70,65,60,55,50,45,40,35,30,25].forEach((v,k)=>{if(v!==60)label(1875,149+k*58.1,v+',00','#444','start',AX)});
['40,000','30,000','20,000','10,000'].forEach((s,k)=>label(1875,906+k*32.300,s,'#444','start',AX));
for(const[x,s]of times){if(s){vline(x+.5,1038,1056,G);label(x+2,1046,s,'#444','start',AX)}}
label(50,1046,'05/23','#333','start','font-weight="bold"');label(1875,1046,'15:30:2','#444','start',AX);
const box=(x,y,w,h,f)=>out+=`<rect x="${x+.5}" y="${y+.5}" width="${w-1}" height="${h-1}" fill="${f}" stroke="#000"/>`;
box(1463,1038,136,18,'#ffdf70');label(1466,1047,'2024/05/24(금) 14:12:35');
box(8,224,37,29,'#ffdf70');label(10,231,'20,574','#444','start',AX);label(43,243,'+2,97%','#f00','end',AX);
box(1870,224,42,29,'#ffdf70');label(1873,231,'20,574','#444','start',AX);label(1872,243,'+2,97%','#f00','start',AX);
rect(10,434,34,13,RED);label(40,441,'0,200','#fff','end',AX);label(39,452,',10%',RED,'end',AX);
rect(1870,434,40,13,RED);label(1873,441,'20,200','#fff','start',AX);label(1875,453,'1,10%',RED,'start',AX);
label(1868,84,'LC:3,70',RED);label(1868,96,'HC:-2,88',BLUE,'start',AX);
rect(1903,877,8,8,'#444');line('P 1905,879 1909,883 | 1909,879 1905,883','#fff',1);
box(12,96,14,14,'#fff');out+='<path d="M14.500 98.500h9v9h-9zM14.500 101.500h9M14.500 104.500h9M17.500 98v10M20.500 98v10" fill="none" stroke="#555"/>';
out+='<rect x="52.500" y="82.500" width="4" height="5" fill="#bbb" stroke="#666"/><rect x="59.500" y="78.500" width="143" height="13" fill="#efefef" stroke="#c4c4c4"/>';
label(63,85,'대명에너지 매물대 수(13)','#333','start','style="font-size:13px"');
label(938,125,'최고 20,800 (-2,88%, 12:15)','#e8190c','end');label(88,836,'최저 19,480 (3,70%, 09:27)','#0000c0');
label(1862,572,'전일종가 19,980 (0,00%)','#993300','end');label(1861,642,'당일시가 19,860 (-0,60%)','#00e000','end');
label(1745,814,'저가) 지수 24:','#000');label(1676,814,'(고가+저가+종가)/3 가중','#ff6600');label(1861,814,'8: 20,160','#ff6600','end');
label(1796,826,'200:','#c0c0c0');label(1861,826,'10: 20,150','#00ccff','end');label(1861,838,'180: 20,170','#000','end');
label(1803,850,'15','#ffcc00');label(1861,850,'5: 20,153','#ff0000','end');label(1802,862,'3','#cce5ff');label(1861,862,'10: 20,150','#0000ff','end');
hline(49,1862,844.5,'#0000ff');
label(1861,920,'거래량: 29,989','#339999','end');label(1861,920,'Signal 60: 4,981','#993300','end');
label(1861,932,'Signal 100: 4,889','#ff9900','end');label(1861,944,'Signal 150: 4,206','#00ffff','end');label(1861,944,'54,706','#000','end');
label(1861,956,'OBV: 23,712','#ff0000','end');label(1861,968,'Signal 24: 4,640','#0000ff','end');
document.getElementById('chart').innerHTML='<g shape-rendering="crispEdges">'+out+'</g>';

// footer tools
const tools=[['차트 추가','M2 1.500h8v8H2zM6 6.500h8v7H6zM10 8v4M8 10h4'],['겹치기','M2 1.500h8v7H2zM5.500 5.500h8v8h-8z'],['추세 점선','M1 2.500h12M1 12.500h12M2 9l3-3 3 3 5-5'],['십자선','M1 3.500h13M4.500 1v13M7 6l6 6M7 6h4M7 6v4'],['수평선','M1 3.500h13M1 11l4-5 3 4 3-5 3 2'],['수직선','M4.500 1v13M1 10l5-4 3 4 3-5 3 3'],['추세선','M1 12L12 1M2 13l5-6 3 4 4-6'],['지우개','M1 9l6-6 5 2-6 6zM1 9v4l5 1V11M12 5v3M11 9v5M13 9v5'],['차트 묶음','M4 1.500h10v7H4zM1.500 6.500h9v7h-9zM3 11l3-2 2 1 2-2'],['돋보기','M10 6a4 4 0 1 0-8 0a4 4 0 1 0 8 0M9 9l5 5'],['축소','M2 7.500h10'],['확대','M2 7.500h11M7.500 2v11'],['글꼴 크기','M3 13L7.500 2 12 13M4.500 9.500h6']];
document.getElementById('icons').innerHTML=tools.map(([n,d],k)=>`<button class="mini${k===3?' on':''}" aria-label="${n}"><svg class="d-block mx-auto" width="15" height="15" fill="none" stroke="#666" stroke-width="${k>9?2.500:1}"><path d="${d}"/></svg></button>`).join('');
</script>
</body>
</html>
